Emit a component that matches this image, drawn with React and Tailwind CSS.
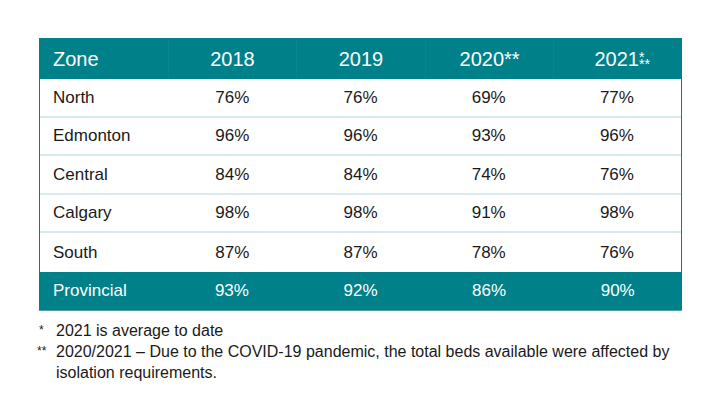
import React from 'react';

const rows = [
  { zone: 'North', values: ['76%', '76%', '69%', '77%'] },
  { zone: 'Edmonton', values: ['96%', '96%', '93%', '96%'] },
  { zone: 'Central', values: ['84%', '84%', '74%', '76%'] },
  { zone: 'Calgary', values: ['98%', '98%', '91%', '98%'] },
  { zone: 'South', values: ['87%', '87%', '78%', '76%'] },
];

const font = { fontFamily: '"Liberation Sans", Arial, Helvetica, sans-serif' };

export default function App() {
  return (
    <div className="w-[720px] h-[410px] bg-white pl-[39px] pt-[38px] text-[#1a1a1a]" style={font}>
      <div className="w-[643px]">
        {/* header */}
        <div className="grid grid-cols-5 h-[41px] bg-[#00818a] text-white text-[20px]">
          <div className="flex items-center pl-[14px]">Zone</div>
          <div className="flex items-center justify-center border-l border-[#0a858e]">2018</div>
          <div className="flex items-center justify-center border-l border-[#0a858e]">2019</div>
          <div className="flex items-center justify-center border-l border-[#0a858e]">2020**</div>
          <div className="flex items-center justify-center border-l border-[#0a858e] pl-[8px]">
            <span>2021</span>
            <span className="flex flex-col text-[14px] leading-[7px] mt-[4px]">
              <span>*</span>
              <span>**</span>
            </span>
          </div>
        </div>

        {/* body */}
        <div className="border-l border-r border-[#00818a]">
          {rows.map((r, i) => (
            <div
              key={r.zone}
              className={
                'grid grid-cols-5 h-[38.6px] text-[17px] ' +
                (i < rows.length - 1 ? 'border-b-2 border-[#d6eaef]' : '')
              }
            >
              <div className="flex items-center pl-[13px]">{r.zone}</div>
              {r.values.map((v, j) => (
                <div key={j} className="flex items-center justify-center">{v}</div>
              ))}
            </div>
          ))}
        </div>

        {/* total */}
        <div className="grid grid-cols-5 h-[39px] bg-[#00818a] text-white text-[17px] border-b border-[#5a9ea3]">
          <div className="flex items-center pl-[14px]">Provincial</div>
          <div className="flex items-center justify-center">93%</div>
          <div className="flex items-center justify-center">92%</div>
          <div className="flex items-center justify-center">86%</div>
          <div className="flex items-center justify-center">90%</div>
        </div>
      </div>

      {/* footnotes */}
      <div className="mt-[9px] text-[16px] leading-[21px] w-[660px]">
        <div className="flex">
          <span className="w-[17px] shrink-0 text-[12px]">*</span>
          <span>2021 is average to date</span>
        </div>
        <div className="flex">
          <span className="w-[17px] shrink-0 text-[12px] -ml-[2px] pr-[2px] box-content">**</span>
          <span>
            2020/2021 – Due to the COVID-19 pandemic, the total beds available were affected by
            isolation requirements.
          </span>
        </div>
      </div>
    </div>
  );
}
